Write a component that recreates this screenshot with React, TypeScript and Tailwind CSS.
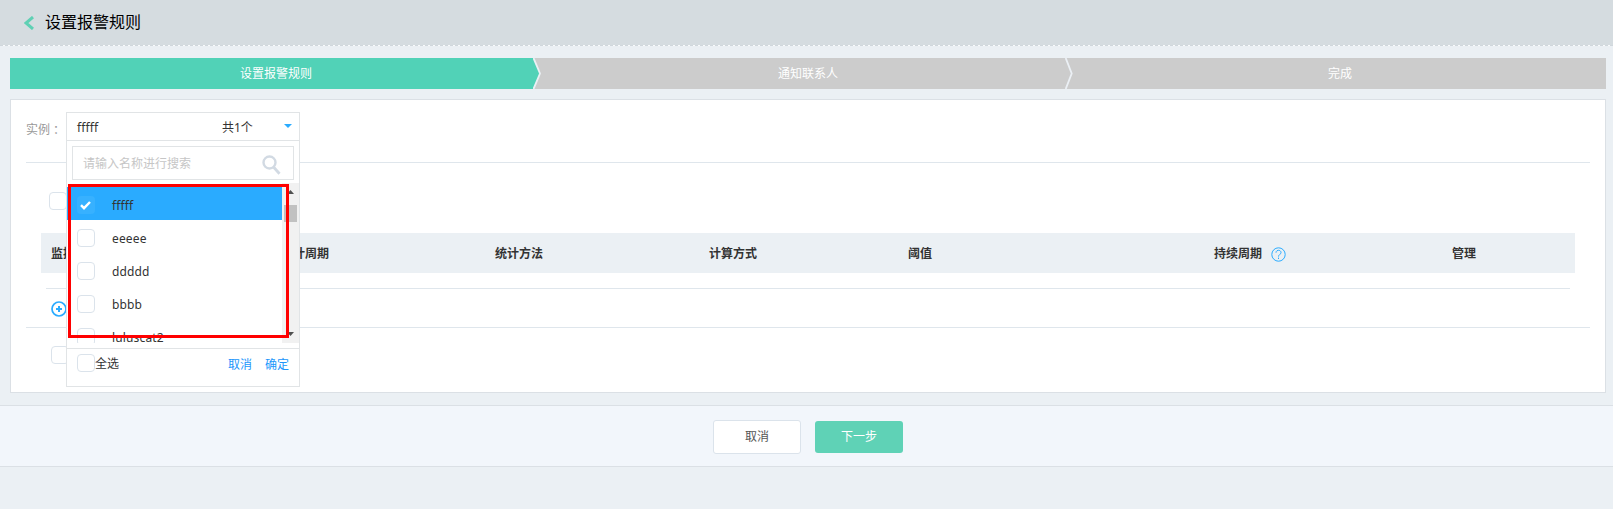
import React from "react";

const headers = [
  { label: "监控项", width: "w-[230px]" },
  { label: "统计周期", width: "w-[214px]" },
  { label: "统计方法", width: "w-[214px]" },
  { label: "计算方式", width: "w-[199px]" },
  { label: "阈值", width: "w-[306px]" },
  { label: "持续周期", width: "w-[238px]", help: true },
  { label: "管理", width: "w-[120px]" },
];

const options = ["fffff", "eeeee", "ddddd", "bbbb", "luluscat2"];

function Box({ checked = false }: { checked?: boolean }) {
  return (
    <span
      className={
        checked
          ? "flex h-[18px] w-[18px] shrink-0 items-center justify-center rounded bg-[#37b1ff]"
          : "block h-[18px] w-[18px] shrink-0 rounded border border-[#dbe3eb] bg-white"
      }
    >
      {checked && (
        <svg className="mr-px mt-px" width="11" height="9" viewBox="0 0 11 9" fill="none" stroke="#fff" strokeWidth="2.4">
          <path d="M1 4.2L4 7.2L10 1" />
        </svg>
      )}
    </span>
  );
}

function Steps() {
  return (
    <div className="relative mx-[10px] mt-3 flex h-[31px] w-[1596px] bg-[#ccc] pt-px text-white">
      <div className="flex w-[532px] items-center justify-center">
        <span className="relative z-10">设置报警规则</span>
      </div>
      <div className="flex w-[532px] items-center justify-center">通知联系人</div>
      <div className="flex w-[532px] items-center justify-center">完成</div>
      <div className="absolute left-0 top-0 h-[31px] w-[523px] bg-[#51d2b7]" />
      <svg className="absolute left-[523px] top-0" width="8" height="31" viewBox="0 0 8 31">
        <path d="M0 0L7 15.5L0 31Z" fill="#51d2b7" />
        <path d="M0.5 0L7 15.5L0.5 31" fill="none" stroke="#ebf0f5" strokeWidth="1.8" />
      </svg>
      <svg className="absolute left-[1055px] top-0" width="8" height="31" viewBox="0 0 8 31">
        <path d="M0.7 0L6.7 15.5L0.7 31" fill="none" stroke="#ebf0f5" strokeWidth="1.8" />
      </svg>
    </div>
  );
}

function InstanceSelect() {
  return (
    <div className="absolute left-[55px] top-3 z-10 flex h-[275px] w-[234px] flex-col border border-[#e1e4e6] bg-white">
      <div className="flex h-[28px] items-center border-b border-[#e1e4e6] pl-[10px]">
        <span className="w-[145px] pt-[3px] tracking-[0.15px]">fffff</span>
        <span className="pt-[2px]">共1个</span>
        <svg className="ml-auto mr-[7px] mt-[-2px]" width="8" height="4" viewBox="0 0 8 4">
          <path d="M0 0H8L4 4Z" fill="#2aabff" />
        </svg>
      </div>
      <div className="mx-[5px] mt-[5px] flex h-[34px] items-center border border-[#e1e4e6] pl-[10px] text-[#c6c6c6]">
        <span className="pt-[2px]">请输入名称进行搜索</span>
        <svg className="ml-auto mr-3 mt-[3px]" width="19" height="20" viewBox="0 0 19 20" fill="none" stroke="#d2dae3">
          <circle cx="7.5" cy="7.5" r="6" strokeWidth="2.4" />
          <path d="M11.5 12L17.5 18.8" strokeWidth="2.8" />
        </svg>
      </div>
      <div className="mt-[3px] flex h-[160px] overflow-hidden">
        <ul className="w-[215px] pt-1">
          {options.map((name, i) => (
            <li
              key={name}
              className={
                i === 0
                  ? "flex h-[33px] items-center bg-[#2aabff] pl-[10px] pt-[3px]"
                  : "flex h-[33px] items-center pl-[10px] pt-[3px]"
              }
            >
              <Box checked={i === 0} />
              <span className="ml-[17px] pt-[2px] tracking-[0.15px]">{name}</span>
            </li>
          ))}
        </ul>
        <div className="flex w-[17px] flex-col items-center bg-[#f1f1f1]">
          <svg className="mt-[7px]" width="7" height="4" viewBox="0 0 7 4">
            <path d="M0 4L3.5 0L7 4Z" fill="#505050" />
          </svg>
          <span className="mt-[11px] h-[17px] w-[13px] bg-[#c1c1c1]" />
          <svg className="mb-[7px] mt-auto" width="7" height="4" viewBox="0 0 7 4">
            <path d="M0 0L3.5 4L7 0Z" fill="#505050" />
          </svg>
        </div>
      </div>
      <div className="mt-[5px] flex h-[37px] border-t border-[#e1e4e6] pl-[10px] pt-[5px]">
        <Box />
        <span className="pt-px leading-[18px]">全选</span>
        <span className="ml-auto mr-[10px] flex gap-[13px] pt-[2px] leading-[18px] text-[#2196fb]">
          <span>取消</span>
          <span>确定</span>
        </span>
      </div>
      <div className="absolute left-[1px] top-[71px] h-[154px] w-[221px] border-[3px] border-[#f00]" />
    </div>
  );
}

export default function App() {
  return (
    <div className="h-[509px] w-[1613px] overflow-hidden bg-[#ebf0f4] font-['Noto_Sans','Noto_Sans_CJK_SC',sans-serif] text-xs text-[#333] [font-variant-ligatures:none]">
      <div className="bg-[#f8fafb]">
        <header className="flex h-[46px] items-center border-b border-dashed border-[#d0d7dc] bg-[#d5dce0] bg-clip-padding pl-6 text-black">
          <svg width="10" height="14" viewBox="0 0 10 14" fill="none" stroke="#5fd0b4" strokeWidth="3">
            <path d="M9 1L2 7L9 13" />
          </svg>
          <h1 className="ml-[11px] pb-[2px] text-base leading-none">设置报警规则</h1>
        </header>
      </div>
      <Steps />
      <main className="relative mx-[10px] mt-[10px] h-[294px] w-[1596px] border border-[#dbe0e5] bg-white px-[15px]">
        <InstanceSelect />
        <div className="flex h-[63px] items-center border-b border-[#dfe6ec] pb-[2px] text-[#999]">
          实例<span className="font-['Noto_Sans_CJK_TC',sans-serif]" lang="zh-TW">：</span>
        </div>
        <div className="h-[70px] pl-[23px] pt-[29px]">
          <Box />
        </div>
        <div className="ml-[15px] flex h-[40px] w-[1534px] items-center bg-[#ebf0f4] pl-[10px] font-bold">
          {headers.map((h) => (
            <div key={h.label} className={`flex shrink-0 items-center gap-[9px] ${h.width}`}>
              <span className="pt-[2px]">{h.label}</span>
              {h.help && (
                <svg className="mt-[2px]" width="15" height="15" viewBox="0 0 15 15" fill="none" stroke="#2aabff">
                  <circle cx="7.5" cy="7.5" r="6.7" />
                  <path d="M5 5.7C5 2.5 10 2.5 10 5.6C10 7.4 7.5 7.4 7.5 9.6M7.5 10.6V12" />
                </svg>
              )}
            </div>
          ))}
        </div>
        <div className="ml-5 mt-[15px] h-px w-[1524px] bg-[#dfe6ec]" />
        <div className="flex h-[39px] items-center border-b border-[#dfe6ec] pl-[25px] pt-[2px]">
          <svg width="16" height="16" viewBox="0 0 16 16" fill="none" stroke="#2aabff" strokeWidth="1.7">
            <circle cx="8" cy="8" r="7" />
            <path d="M5 8H11M8 5V11" strokeWidth="2" />
          </svg>
        </div>
        <div className="pl-[25px] pt-[18px]">
          <Box />
        </div>
      </main>
      <footer className="mt-3 flex h-[62px] justify-center border-y border-[#dbe0e5] bg-[#f2f6fb] pt-[14px]">
        <div className="ml-[3px] flex gap-[14px]">
          <button className="h-[34px] w-[88px] rounded-[3px] border border-[#dbe3eb] bg-white text-[#555]">取消</button>
          <button className="mt-px h-[32px] w-[88px] rounded-[3px] bg-[#5fd2b6] text-white">下一步</button>
        </div>
      </footer>
    </div>
  );
}
